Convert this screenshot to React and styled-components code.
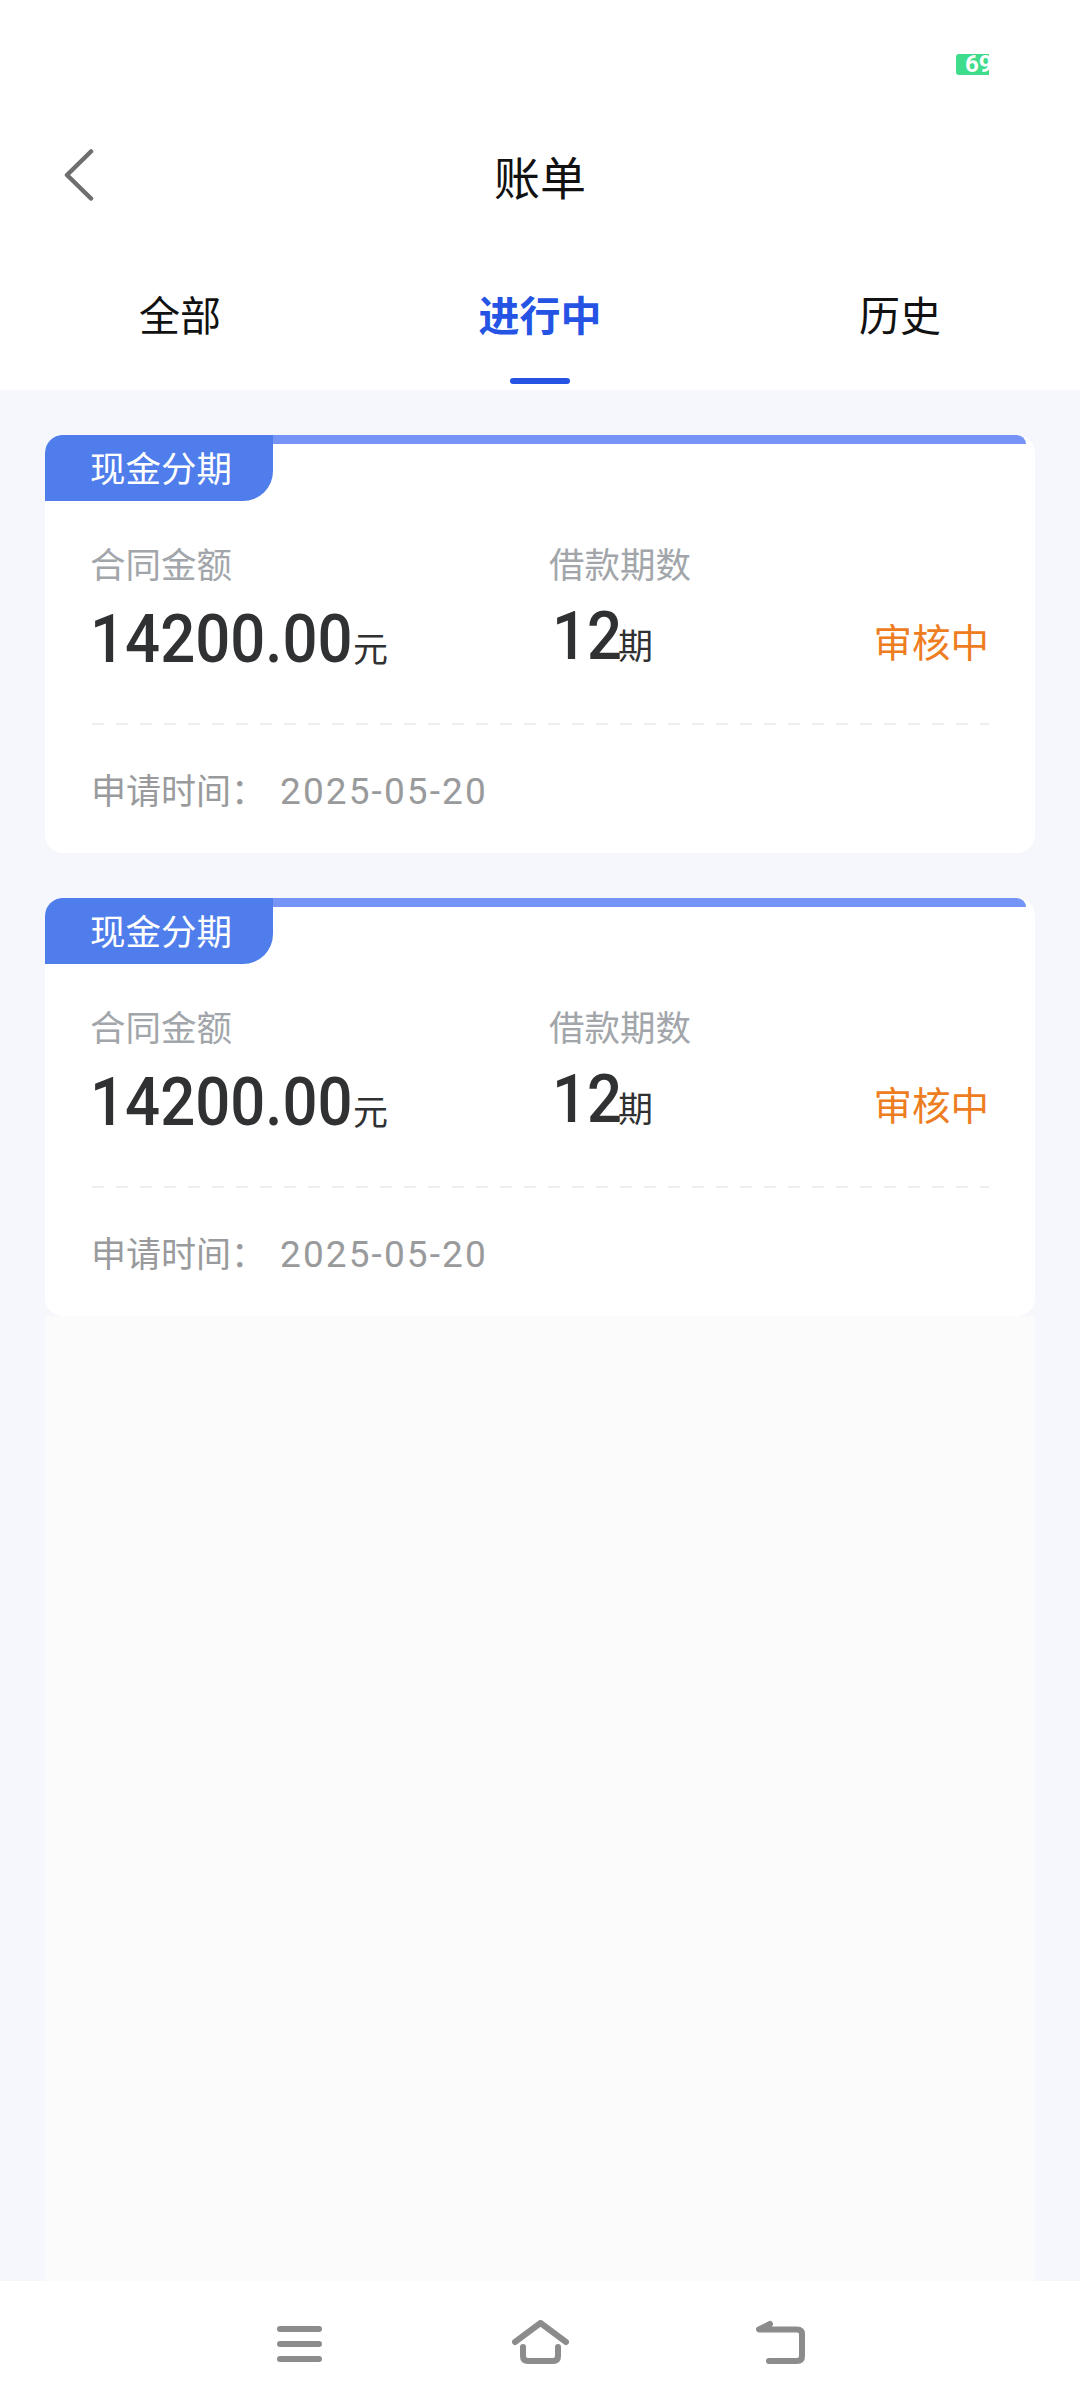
import React from "react";
import styled, { createGlobalStyle } from "styled-components";

const Global = createGlobalStyle`
  html, body { margin: 0; padding: 0; background: #fff; }
  * { box-sizing: border-box; }
  body { font-family: "Noto Sans CJK SC", "Noto Sans", sans-serif; }
`;

const Page = styled.div`
  width: 1080px;
  height: 2408px;
  display: flex;
  flex-direction: column;
  background: #f5f7fc;
  overflow: hidden;
`;
const Header = styled.header`
  background: #fff;
  height: 390px;
  flex: none;
  display: flex;
  flex-direction: column;
`;
const StatusBar = styled.div`
  height: 131px;
  flex: none;
  padding: 54px 91px 0 0;
  display: flex;
  justify-content: flex-end;
  align-items: flex-start;
`;
const Battery = styled.div`
  width: 33px;
  height: 21px;
  background: #3fdc8b;
  border-radius: 3px 0 0 3px;
  color: #fff;
  font: 700 24px/21px "Roboto", sans-serif;
  padding-left: 9px;
  white-space: nowrap;
  overflow: hidden;
`;
const TitleBar = styled.div`
  height: 88px;
  flex: none;
  padding: 0 0 0 63px;
  display: grid;
  grid-template-columns: 32px 1fr 32px;
  align-items: center;
  margin-right: 63px;
`;
const BackIcon = styled.svg`
  width: 32px;
  height: 52px;
  display: block;
`;
const Title = styled.h1`
  margin: 0;
  font-size: 46px;
  line-height: 88px;
  font-weight: 400;
  text-align: center;
  color: #111;
`;
const Tabs = styled.nav`
  flex: 1;
  display: grid;
  grid-template-columns: 360px 360px 360px;
`;
const Tab = styled.div`
  position: relative;
  text-align: center;
  font-size: 41px;
  line-height: 56px;
  padding-top: 66px;
  font-weight: ${(p) => (p.$active ? 700 : 400)};
  color: ${(p) => (p.$active ? "#2554e4" : "#111")};
`;
const Underline = styled.span`
  position: absolute;
  left: 150px;
  bottom: 6px;
  width: 60px;
  height: 6px;
  border-radius: 3px;
  background: #2554e4;
`;
const List = styled.main`
  flex: 1;
  padding: 45px 45px 0;
  display: flex;
  flex-direction: column;
  gap: 45px;
`;
const Card = styled.section`
  flex: none;
  height: 418px;
  background: #fff;
  border-radius: 18px;
  overflow: hidden;
`;
const CardHead = styled.div`
  display: flex;
  align-items: flex-start;
  padding-right: 9px;
`;
const Tag = styled.div`
  width: 228px;
  height: 66px;
  background: #4f7deb;
  color: #fff;
  border-radius: 16px 0 30px 0;
  font-size: 35.5px;
  line-height: 64px;
  padding-left: 45px;
  flex: none;
`;
const TopBar = styled.div`
  flex: 1;
  height: 9px;
  background: #7594f5;
  border-radius: 0 10px 0 0;
`;
const CardRow = styled.div`
  display: flex;
  align-items: flex-start;
  padding: 40px 46px 0 45px;
`;
const Col = styled.div`
  width: ${(p) => p.$w}px;
  flex: none;
`;
const Label = styled.div`
  font-size: 35.5px;
  line-height: 44px;
  color: #a2a6aa;
`;
const Value = styled.div`
  display: flex;
  align-items: baseline;
  height: 66px;
  padding-left: ${(p) => p.$pl || 0}px;
  margin-top: ${(p) => p.$mt}px;
  color: #303133;
`;
const Num = styled.span`
  display: inline-block;
  width: ${(p) => p.$w}px;
  font: 500 66px/66px "Roboto", sans-serif;
  white-space: nowrap;
  transform: scaleX(0.935);
  transform-origin: left center;
`;
const Unit = styled.span`
  font-size: 35px;
  line-height: 66px;
`;
const Status = styled.div`
  margin-left: auto;
  margin-top: 73px;
  font-size: 38.5px;
  line-height: 52px;
  color: #ee7d22;
`;
const Divider = styled.div`
  height: 2px;
  margin: 50px 46px 0 47px;
  background-image: repeating-linear-gradient(to right, #eeeeee 0 12px, transparent 12px 24px);
`;
const Foot = styled.div`
  display: flex;
  align-items: center;
  height: 52px;
  margin-top: 41px;
  padding-left: 46px;
  color: #999a9c;
  font-size: 35px;
`;
const FootKey = styled.span`
  width: 189px;
  flex: none;
  line-height: 46px;
  margin-bottom: 6px;
`;
const FootDate = styled.span`
  font: 400 37px/52px "Roboto", sans-serif;
  letter-spacing: 2.1px;
`;
const Rest = styled.div`
  flex: 1;
  margin-top: -45px;
  background: #fbfbfc;
`;
const BottomNav = styled.footer`
  height: 127px;
  flex: none;
  background: #fff;
  display: grid;
  grid-template-columns: 277px 45px 190px 57px 187px 49px;
  padding-top: 39px;
`;
const NavIcon = styled.svg`
  grid-column: ${(p) => p.$col};
  width: ${(p) => p.$w}px;
  height: 44px;
  display: block;
`;

const BillCard = () => (
  <Card>
    <CardHead>
      <Tag>现金分期</Tag>
      <TopBar />
    </CardHead>
    <CardRow>
      <Col $w={459}>
        <Label>合同金额</Label>
        <Value $mt={22}>
          <Num $w={263}>14200.00</Num>
          <Unit>元</Unit>
        </Value>
      </Col>
      <Col $w={300}>
        <Label>借款期数</Label>
        <Value $mt={19} $pl={3}>
          <Num $w={66}>12</Num>
          <Unit>期</Unit>
        </Value>
      </Col>
      <Status>审核中</Status>
    </CardRow>
    <Divider />
    <Foot>
      <FootKey>申请时间：</FootKey>
      <FootDate>2025-05-20</FootDate>
    </Foot>
  </Card>
);

export default function App() {
  return (
    <Page>
      <Global />
      <Header>
        <StatusBar>
          <Battery>69</Battery>
        </StatusBar>
        <TitleBar>
          <BackIcon viewBox="0 0 32 52" fill="none">
            <path d="M28 2.5 L4 26 L28 49.5" stroke="#6e6e6e" strokeWidth="4.5" strokeLinecap="round" strokeLinejoin="round" />
          </BackIcon>
          <Title>账单</Title>
        </TitleBar>
        <Tabs>
          <Tab>全部</Tab>
          <Tab $active>
            进行中
            <Underline />
          </Tab>
          <Tab>历史</Tab>
        </Tabs>
      </Header>
      <List>
        <BillCard />
        <BillCard />
        <Rest />
      </List>
      <BottomNav>
        <NavIcon $col={2} $w={45} viewBox="0 0 45 44" fill="none">
          <path d="M3 9 H42 M3 24 H42 M3 39 H42" stroke="#8c8c8c" strokeWidth="6" strokeLinecap="round" />
        </NavIcon>
        <NavIcon $col={4} $w={57} viewBox="0 0 57 44" fill="none">
          <path d="M3 22 L28.5 3 L54 22" stroke="#8c8c8c" strokeWidth="6" strokeLinecap="round" strokeLinejoin="round" />
          <path d="M11 27 V36 Q11 41 16 41 H41 Q46 41 46 36 V27" stroke="#8c8c8c" strokeWidth="6" strokeLinecap="round" />
        </NavIcon>
        <NavIcon $col={6} $w={49} viewBox="0 0 49 44" fill="none">
          <path d="M14 4 L3 9.5 H41 Q46 9.5 46 14 V36 Q46 41 41 41 H13" stroke="#8c8c8c" strokeWidth="6" strokeLinecap="round" strokeLinejoin="round" />
        </NavIcon>
      </BottomNav>
    </Page>
  );
}
